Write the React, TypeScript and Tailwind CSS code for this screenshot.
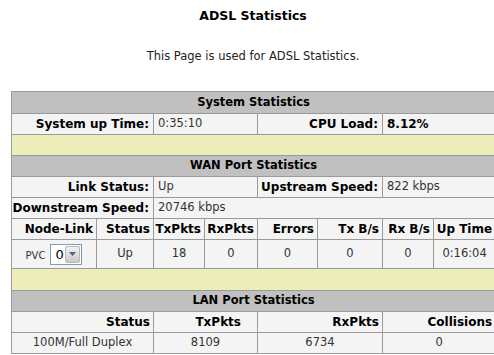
import React from 'react';

const cols = [85, 57, 51, 53, 60, 65, 51, 62];

function Header({ title, h = 'h-[21px]' }: { title: string; h?: string }) {
  return (
    <tr>
      <td colSpan={8} className={`${h} border border-[#9a9a9a] bg-[#c0c0c0] p-0 text-center text-[11.5px] font-bold text-black`}>
        {title}
      </td>
    </tr>
  );
}

function Spacer({ h }: { h: string }) {
  return (
    <tr>
      <td colSpan={8} className={`${h} border border-[#9a9a9a] bg-[#ededb9] p-0`} />
    </tr>
  );
}

const label = 'h-[21px] border border-[#9a9a9a] bg-[#f4f4f4] py-0 pr-[4px] text-right text-[12px] font-bold text-black whitespace-nowrap';
const value = 'h-[21px] border border-[#9a9a9a] bg-[#f4f4f4] py-0 pl-[4px] text-left text-[11.5px] text-[#333] whitespace-nowrap';
const th = 'h-[21px] border border-[#9a9a9a] bg-[#f4f4f4] py-0 pr-[3px] text-right text-[12px] font-bold text-black whitespace-nowrap';
const td = 'border border-[#9a9a9a] bg-[#f4f4f4] p-0 text-center text-[11.5px] text-[#333] whitespace-nowrap';

export default function App() {
  return (
    <div className="w-[494px] h-[355px] overflow-hidden bg-white" style={{ fontFamily: '"DejaVu Sans", Verdana, sans-serif' }}>
      <div className="w-[506px]">
        <div className="pt-[8px] text-center text-[12.5px] leading-[16px] font-bold text-black">ADSL Statistics</div>
        <div className="mt-[25px] text-center text-[11.5px] leading-[14px] text-[#222]">This Page is used for ADSL Statistics.</div>

        <table className="mt-[28px] ml-[11px] table-fixed border-collapse w-[484px]">
          <colgroup>
            {cols.map((w, i) => (
              <col key={i} style={{ width: w }} />
            ))}
          </colgroup>
          <tbody>
            <Header title="System Statistics" h="h-[22px]" />
            <tr>
              <td colSpan={2} className={label}>System up Time:</td>
              <td colSpan={2} className={value}>0:35:10</td>
              <td colSpan={2} className={label}>CPU Load:</td>
              <td colSpan={2} className={`${value} font-bold text-black !text-[12px]`}>8.12%</td>
            </tr>
            <Spacer h="h-[21px]" />

            <Header title="WAN Port Statistics" />
            <tr>
              <td colSpan={2} className={label}>Link Status:</td>
              <td colSpan={2} className={value}>Up</td>
              <td colSpan={2} className={label}>Upstream Speed:</td>
              <td colSpan={2} className={value}>822 kbps</td>
            </tr>
            <tr>
              <td colSpan={2} className={label}>Downstream Speed:</td>
              <td colSpan={6} className={value}>20746 kbps</td>
            </tr>
            <tr>
              <td className={th}>Node-Link</td>
              <td className={th}>Status</td>
              <td className={th}>TxPkts</td>
              <td className={th}>RxPkts</td>
              <td className={th}>Errors</td>
              <td className={th}>Tx B/s</td>
              <td className={th}>Rx B/s</td>
              <td className={th}>Up Time</td>
            </tr>
            <tr className="h-[29px]">
              <td className={td}>
                <div className="flex items-center justify-center gap-[5px]">
                  <span className="pt-[2px] text-[10px] text-[#333]">PVC</span>
                  <div className="flex h-[21px] w-[32px] items-stretch border border-[#7f9db9] bg-white">
                    <span className="flex-1 pl-[4px] text-left text-[13px] leading-[19px] text-black">0</span>
                    <span className="my-[1px] mr-[1px] flex w-[15px] items-center justify-center rounded-[2px] border border-[#b8b8b8] bg-gradient-to-b from-[#f2f2f2] to-[#c8c8c8]">
                      <svg width="7" height="4" viewBox="0 0 7 4">
                        <path d="M0 0h7L3.5 4z" fill="#4d6185" />
                      </svg>
                    </span>
                  </div>
                </div>
              </td>
              <td className={td}>Up</td>
              <td className={td}>18</td>
              <td className={td}>0</td>
              <td className={td}>0</td>
              <td className={td}>0</td>
              <td className={td}>0</td>
              <td className={td}>0:16:04</td>
            </tr>
            <Spacer h="h-[22px]" />

            <Header title="LAN Port Statistics" />
            <tr>
              <td colSpan={2} className={th}>Status</td>
              <td colSpan={2} className={`${th} !pr-[16px]`}>TxPkts</td>
              <td colSpan={2} className={th}>RxPkts</td>
              <td colSpan={2} className={th}>Collisions</td>
            </tr>
            <tr className="h-[21px]">
              <td colSpan={2} className={td}>100M/Full Duplex</td>
              <td colSpan={2} className={td}>8109</td>
              <td colSpan={2} className={td}>6734</td>
              <td colSpan={2} className={td}>0</td>
            </tr>
          </tbody>
        </table>
      </div>
    </div>
  );
}
